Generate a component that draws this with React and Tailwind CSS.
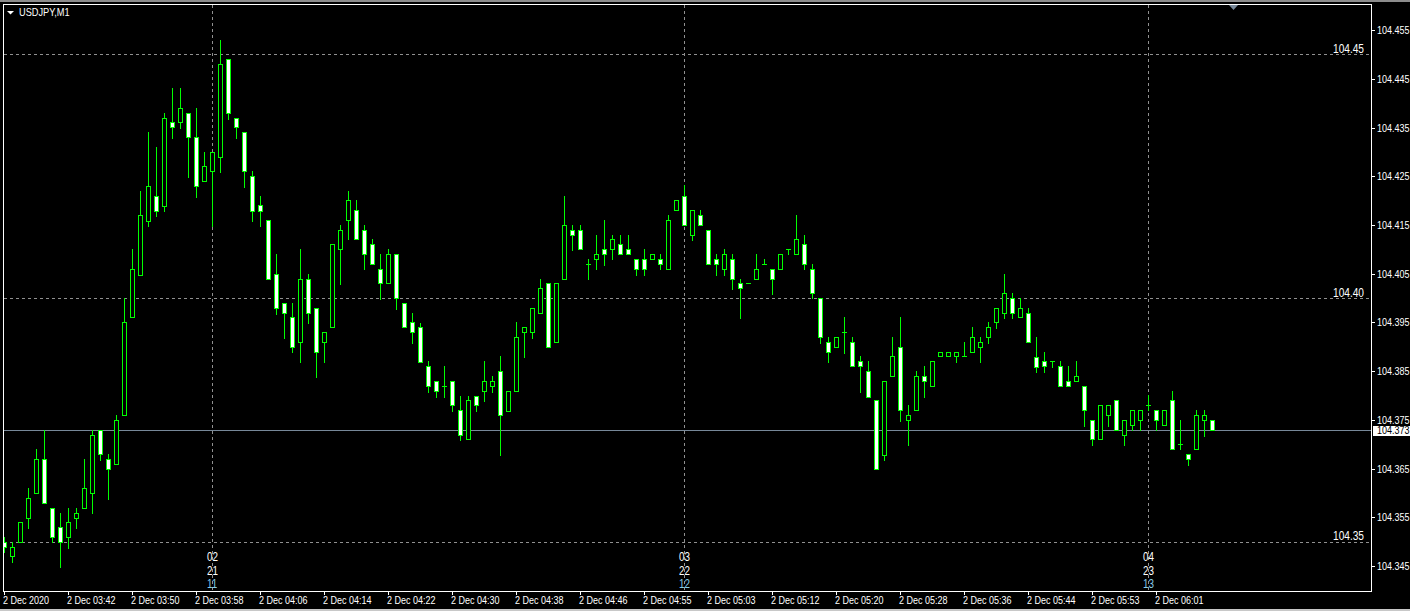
import React from 'react';

// [high, bodyTop, bodyBottom, low, filled] for each M1 bar, 8px apart, pixel rows
const BARS = [
  [537,542,547,552,1],[542,547,556,562,0],[522,522,542,542,0],[488,498,518,528,0],[449,459,493,493,0],
  [430,459,503,503,1],[508,508,537,542,1],[513,527,542,567,1],[508,522,537,548,0],[508,513,518,528,0],
  [459,488,508,508,0],[430,435,493,513,0],[430,430,454,460,1],[454,459,469,499,1],[415,420,464,464,0],
  [298,322,415,415,0],[249,269,317,317,0],[191,215,275,275,0],[132,186,221,226,0],[147,196,211,216,1],
  [113,118,206,211,0],[88,122,127,138,1],[88,108,122,128,0],[113,113,137,177,1],[108,137,186,197,1],
  [152,166,181,181,0],[152,152,171,226,0],[40,64,157,172,0],[59,59,113,119,1],[118,118,127,138,1],
  [132,132,171,187,1],[171,176,211,221,1],[196,205,211,226,1],[220,220,279,279,1],[254,274,308,314,1],
  [303,303,313,338,1],[303,317,347,352,1],[249,279,342,362,0],[274,279,313,323,1],[308,308,352,377,1],
  [332,332,342,362,0],[244,244,327,327,0],[225,230,249,284,0],[191,200,220,239,0],[200,210,239,239,1],
  [225,230,254,269,1],[239,244,264,264,1],[254,269,283,299,1],[249,254,283,283,0],[254,254,298,309,1],
  [303,303,327,327,1],[313,322,332,343,1],[323,327,362,362,1],[361,366,386,392,1],[381,381,391,397,1],
  [366,386,386,397,1],[381,381,405,411,1],[396,410,435,440,1],[396,400,439,439,0],[396,396,405,411,1],
  [361,381,391,401,0],[376,381,386,392,0],[356,371,415,455,1],[391,391,411,411,0],[322,337,391,391,0],
  [327,327,332,357,0],[308,308,332,338,0],[279,288,313,313,0],[283,283,347,347,1],[283,283,342,342,0],
  [196,225,279,279,0],[225,230,235,250,1],[225,230,249,249,1],[259,264,264,279,0],[235,254,259,269,0],
  [220,249,254,265,1],[235,239,249,259,0],[235,244,254,254,1],[235,249,254,254,1],[259,259,269,275,1],
  [249,259,269,275,1],[254,254,259,259,0],[254,259,264,269,1],[215,220,269,269,0],[200,200,210,210,0],
  [185,196,225,225,1],[210,210,235,240,0],[210,215,225,225,1],[230,230,264,264,1],[254,259,264,275,1],
  [249,254,269,275,0],[254,259,279,289,1],[279,283,288,318,1],[283,283,283,283,0],[254,269,279,279,0],
  [259,264,264,264,0],[269,269,279,294,1],[254,254,269,269,0],[249,249,249,254,0],[215,239,254,254,0],
  [235,244,264,269,1],[264,269,293,298,1],[298,298,337,343,1],[337,342,352,362,1],[337,337,347,347,0],
  [317,332,332,353,0],[337,342,366,366,1],[356,361,366,392,1],[361,371,397,397,1],[400,400,469,469,1],
  [381,381,455,460,0],[337,356,376,376,0],[317,347,410,421,1],[405,415,420,445,0],[371,376,410,410,0],
  [366,376,381,397,1],[361,361,386,386,0],[352,352,356,356,0],[352,352,356,356,0],[352,352,356,362,0],
  [342,356,356,356,0],[327,337,352,352,0],[337,342,347,362,0],[322,327,337,343,0],[308,308,322,328,0],
  [274,293,313,318,0],[293,298,313,318,1],[298,308,317,317,0],[308,313,342,342,1],[337,357,367,372,1],
  [352,361,366,372,1],[361,361,361,367,0],[361,366,386,386,1],[366,381,386,386,1],[361,376,381,381,0],
  [386,386,410,426,1],[420,420,439,445,1],[405,405,439,439,0],[405,405,415,426,0],[400,400,430,430,1],
  [420,420,435,445,0],[410,410,425,430,0],[410,410,420,430,0],[395,405,405,410,0],[410,410,420,430,1],
  [410,410,425,425,0],[391,400,449,449,1],[420,444,444,449,0],[454,454,459,465,1],[410,415,449,449,0],
  [410,415,420,436,0],[420,420,430,430,1],
];

const PRICE_TICKS = [
  ['104.455', 30], ['104.445', 79], ['104.435', 128], ['104.425', 176], ['104.415', 225], ['104.405', 274],
  ['104.395', 322], ['104.385', 371], ['104.375', 420], ['104.365', 469], ['104.355', 517], ['104.345', 566],
];

const TIME_LABELS = [
  '2 Dec 2020', '2 Dec 03:42', '2 Dec 03:50', '2 Dec 03:58', '2 Dec 04:06', '2 Dec 04:14', '2 Dec 04:22',
  '2 Dec 04:30', '2 Dec 04:38', '2 Dec 04:46', '2 Dec 04:55', '2 Dec 05:03', '2 Dec 05:12', '2 Dec 05:20',
  '2 Dec 05:28', '2 Dec 05:36', '2 Dec 05:44', '2 Dec 05:53', '2 Dec 06:01',
];

const GRID_Y = [[54, '104.45', 53], [298, '104.40', 297], [542, '104.35', 540]];
const PERIODS = [[212, '02', '21', '11'], [684, '03', '22', '12'], [1148, '04', '23', '13']];

const FONT = '"Liberation Sans", Arial, sans-serif';

// the terminal font is narrower than anything installed, so squeeze horizontally
const Label = ({ x, y, sx = 0.82, size = 11, fill = '#ffffff', children }) => (
  <text transform={`translate(${x} ${y}) scale(${sx} 1)`} fontFamily={FONT} fontSize={size} fill={fill}>
    {children}
  </text>
);

const Candle = ({ bar, x }) => {
  const [high, top, bottom, low, filled] = bar;
  return (
    <g>
      <rect x={x} y={high} width={1} height={low - high + 1} fill="#00ff00" />
      <rect x={x - 2} y={top} width={5} height={bottom - top + 1} fill="#00ff00" />
      {bottom - top > 1 && (
        <rect x={x - 1} y={top + 1} width={3} height={bottom - top - 1} fill={filled ? '#ffffff' : '#000000'} />
      )}
    </g>
  );
};

const Plot = () => (
  <svg width="1367" height="586" viewBox="4 5 1367 586" shapeRendering="crispEdges" className="block">
    {GRID_Y.map(([y]) => (
      <line key={y} x1="4" x2="1371" y1={y + 0.5} y2={y + 0.5} stroke="#909090" strokeDasharray="3 3" />
    ))}
    {PERIODS.map(([x]) => (
      <line key={x} x1={x + 0.5} x2={x + 0.5} y1="5" y2="591" stroke="#909090" strokeDasharray="3 3" />
    ))}
    <rect x="4" y="430" width="1367" height="1" fill="#778899" />
    {BARS.map((bar, i) => (
      <Candle key={i} bar={bar} x={4 + i * 8} />
    ))}
    <polygon points="1229,5 1238,5 1233.5,10" fill="#778899" shapeRendering="auto" />
    <polygon points="7,11 14,11 10.5,14.5" fill="#ffffff" shapeRendering="auto" />
    <Label x={19} y={16} sx={0.84}>USDJPY,M1</Label>
    {GRID_Y.map(([, text, y]) => (
      <Label key={text} x={1333} y={y} size={13} sx={0.78}>{text}</Label>
    ))}
    {PERIODS.map(([x, a, b, c]) => (
      <g key={x}>
        <Label x={x - 5} y={561} size={13} sx={0.76}>{a}</Label>
        <Label x={x - 5} y={575} size={13} sx={0.76}>{b}</Label>
        <Label x={x - 5} y={588} size={13} sx={0.76} fill="#87ceeb">{c}</Label>
      </g>
    ))}
  </svg>
);

const PriceAxis = () => (
  <svg width="38" height="588" viewBox="1372 4 38 588" className="block">
    {PRICE_TICKS.map(([text, y]) => (
      <g key={text}>
        <rect x="1372" y={y} width="3" height="1" fill="#ffffff" shapeRendering="crispEdges" />
        <Label x={1377} y={y + 4} sx={0.82}>{text}</Label>
      </g>
    ))}
    <rect x="1373" y="426" width="37" height="10" fill="#ffffff" shapeRendering="crispEdges" />
    <Label x={1377} y={434} sx={0.82} fill="#000000">104.373</Label>
  </svg>
);

const TimeAxis = () => (
  <svg width="1410" height="17" viewBox="0 592 1410 17" className="block">
    {TIME_LABELS.map((text, i) => (
      <g key={text}>
        <rect x={4 + i * 64} y="592" width="1" height="3" fill="#ffffff" shapeRendering="crispEdges" />
        <Label x={3 + i * 64} y={604} sx={0.82}>{text}</Label>
      </g>
    ))}
  </svg>
);

export default function App() {
  return (
    <div className="w-[1410px] h-[611px] bg-black flex flex-col overflow-hidden">
      <div className="h-[2px] bg-[#8c8c8c] mb-[2px]" />
      <div className="flex h-[588px] pl-[3px]">
        <div className="w-[1369px] border border-white">
          <Plot />
        </div>
        <PriceAxis />
      </div>
      <TimeAxis />
      <div className="h-[2px] bg-[#c8c8c8]" />
    </div>
  );
}
